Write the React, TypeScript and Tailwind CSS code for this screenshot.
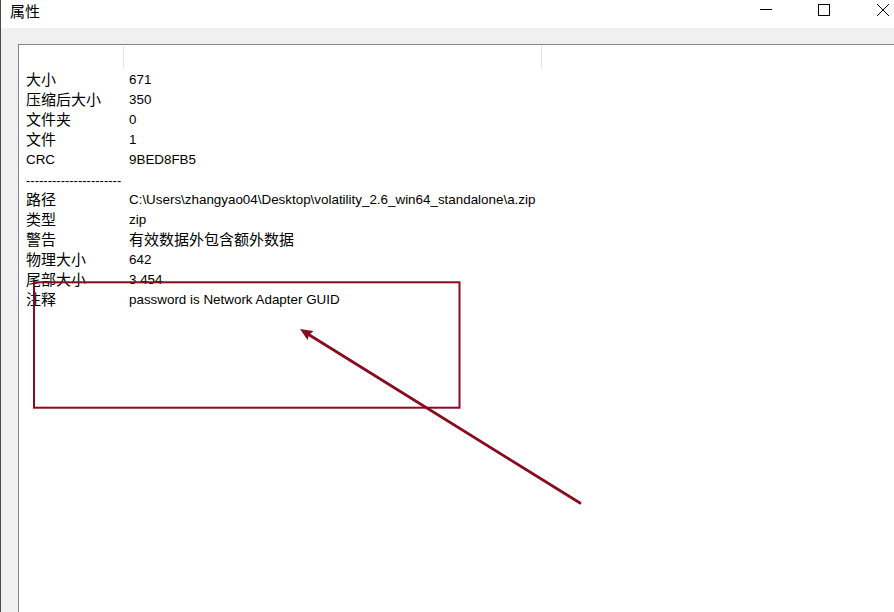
type Row = { label: string; value: string; cjkLabel?: boolean; cjkValue?: boolean };

const rows: Row[] = [
  { label: "大小", value: "671", cjkLabel: true },
  { label: "压缩后大小", value: "350", cjkLabel: true },
  { label: "文件夹", value: "0", cjkLabel: true },
  { label: "文件", value: "1", cjkLabel: true },
  { label: "CRC", value: "9BED8FB5" },
  { label: "----------------------", value: "" },
  { label: "路径", value: "C:\\Users\\zhangyao04\\Desktop\\volatility_2.6_win64_standalone\\a.zip", cjkLabel: true },
  { label: "类型", value: "zip", cjkLabel: true },
  { label: "警告", value: "有效数据外包含额外数据", cjkLabel: true, cjkValue: true },
  { label: "物理大小", value: "642", cjkLabel: true },
  { label: "尾部大小", value: "3 454", cjkLabel: true },
  { label: "注释", value: "password is Network Adapter GUID", cjkLabel: true },
];

const latin = "font-['Liberation_Sans',sans-serif] text-[13.4px] pt-[2px]";
const cjk = "font-['Noto_Sans_CJK_SC','Microsoft_YaHei',sans-serif] text-[15px] -mt-[1px]";

export default function App() {
  return (
    <div className="relative w-[894px] h-[612px] overflow-hidden bg-white flex flex-col text-black">
      {/* title bar */}
      <div className="h-[28px] flex border-l border-[#4a4a4a] shrink-0">
        <span className="font-['Noto_Sans_CJK_SC','Microsoft_YaHei',sans-serif] text-[15px] pl-[9px] pt-[3px] leading-none">属性</span>
        <div className="ml-auto flex items-start pt-[4px] pr-[5px] gap-[46px]">
          <svg width="12" height="12" viewBox="0 0 12 12">
            <line x1="0" y1="5.5" x2="12" y2="5.5" stroke="#000" strokeWidth="1" />
          </svg>
          <svg width="12" height="12" viewBox="0 0 12 12">
            <rect x="0.5" y="0.5" width="11" height="11" fill="none" stroke="#000" strokeWidth="1" />
          </svg>
          <svg className="ml-[1px]" width="12" height="12" viewBox="0 0 12 12">
            <path d="M0 0 L12 12 M12 0 L0 12" stroke="#000" strokeWidth="1" />
          </svg>
        </div>
      </div>

      {/* dialog body */}
      <div className="flex-1 bg-[#f0f0f0] pt-[16px] pl-[17px] border-l border-[#4a4a4a]">
        <div className="h-full bg-white border-t border-l border-[#828790]">
          <div className="h-[24px] flex">
            <div className="w-[105px] border-r border-[#e5e5e5] mt-[1px]" />
            <div className="w-[418px] border-r border-[#e5e5e5] mt-[1px]" />
          </div>
          <div className="flex flex-col">
            {rows.map((r, i) => (
              <div key={i} className="h-[20px] flex items-center">
                <div
                  className={`w-[105px] pl-[7px] whitespace-nowrap leading-none ${
                    r.cjkLabel ? cjk : r.value ? latin : "font-['Liberation_Sans',sans-serif] text-[13px] pt-[2px]"
                  }`}
                >
                  {r.label}
                </div>
                <div className={`pl-[5px] whitespace-nowrap ${r.cjkValue ? cjk : latin} leading-none`}>
                  {r.value}
                </div>
              </div>
            ))}
          </div>
        </div>
      </div>

      {/* annotation overlay */}
      <svg className="absolute left-0 top-0 pointer-events-none" width="894" height="612" viewBox="0 0 894 612">
        <rect x="34" y="282.3" width="425.5" height="125.4" fill="none" stroke="#8a0b1f" strokeWidth="2" />
        <line x1="580" y1="503" x2="307" y2="333.5" stroke="#8a0b1f" strokeWidth="2.8" strokeLinecap="round" />
        <polygon points="300,329 313.5,331 309,335 307.5,340" fill="#8a0b1f" />
      </svg>
    </div>
  );
}
